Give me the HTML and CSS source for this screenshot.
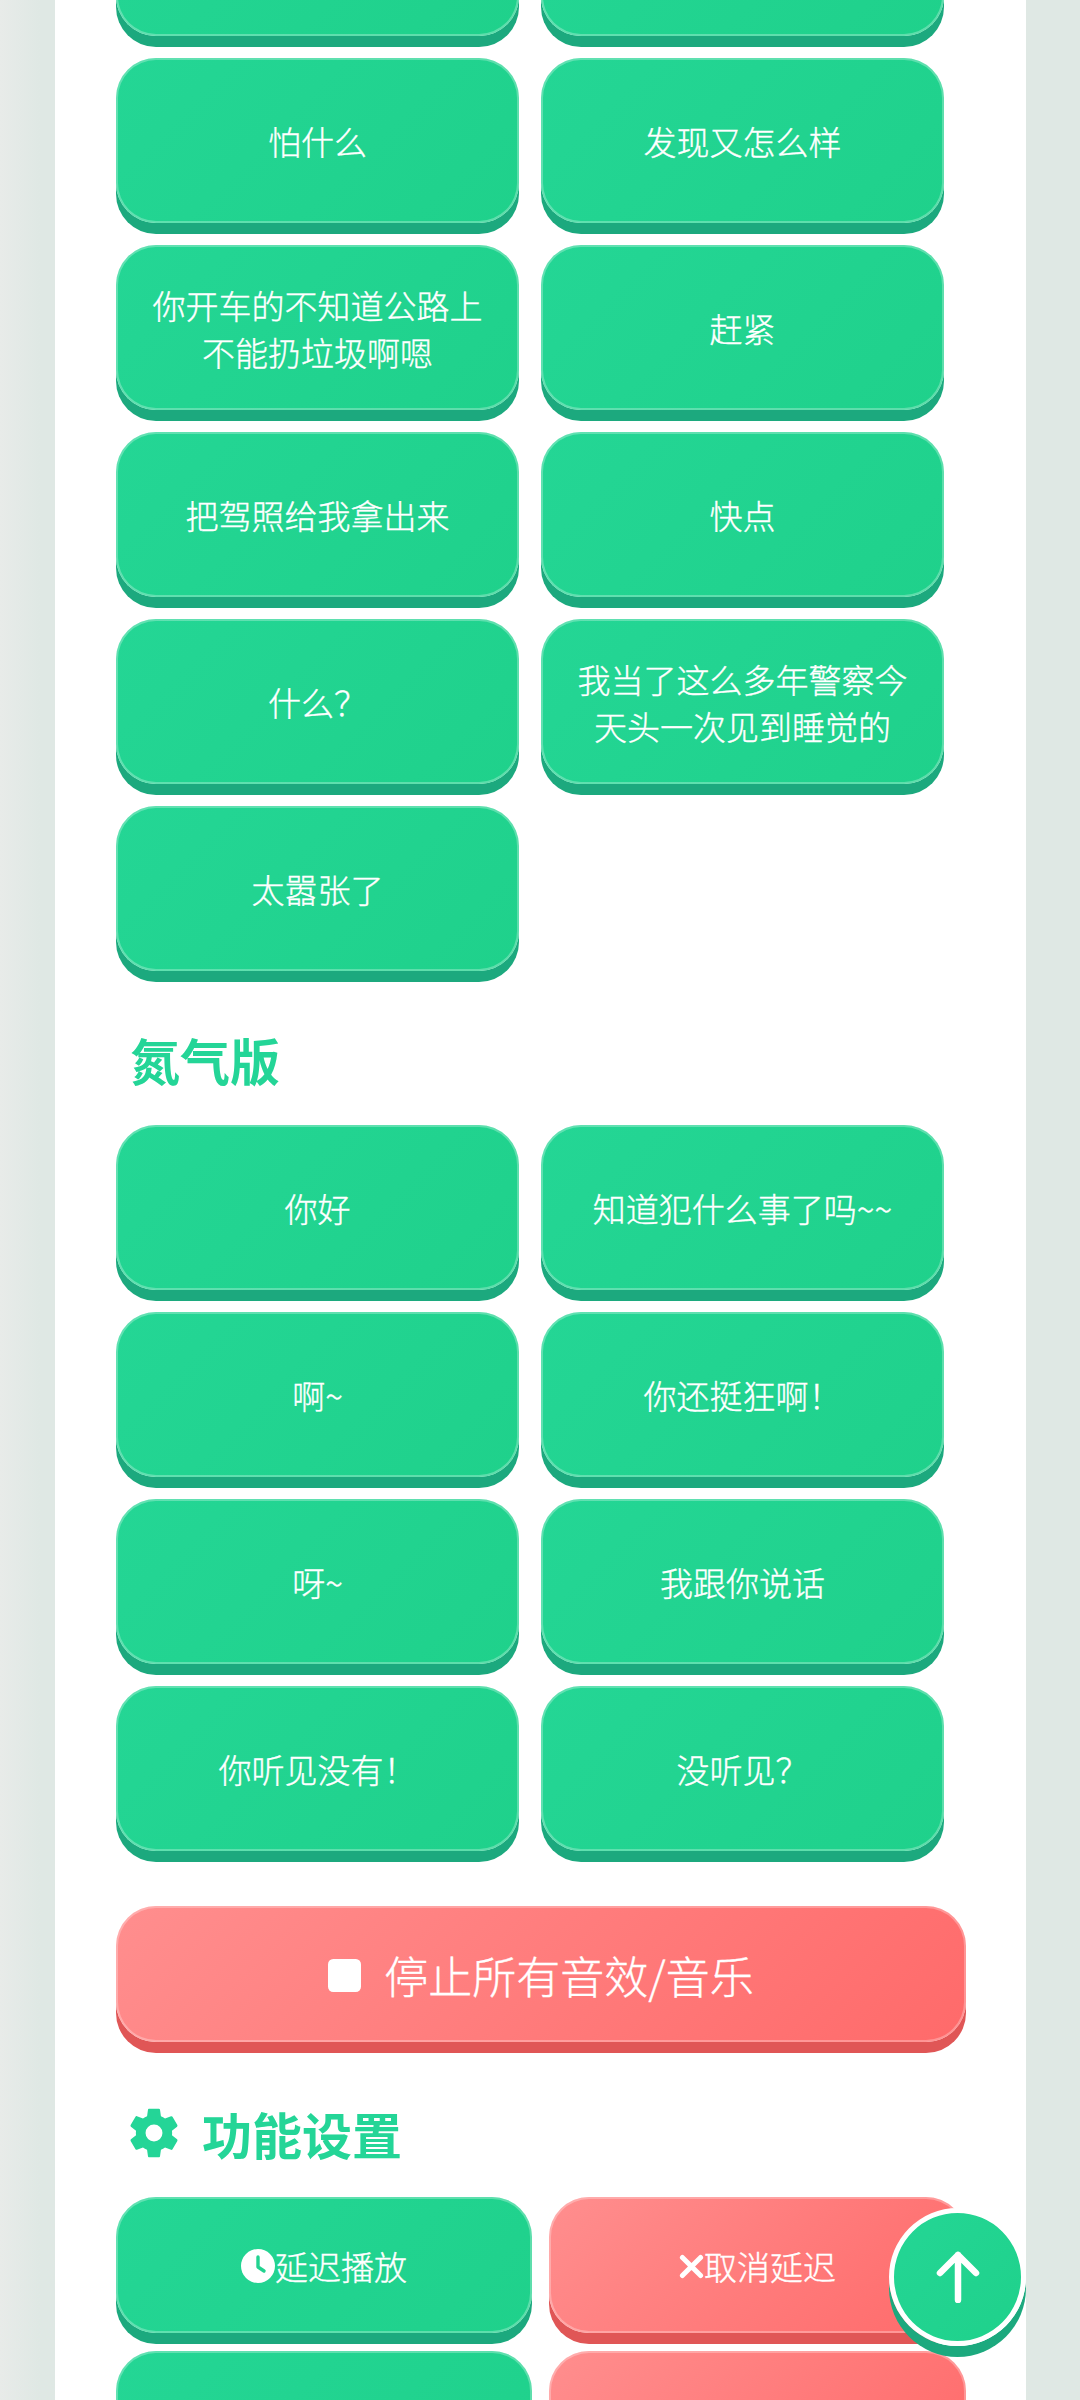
FILE: index.html
```html
<!DOCTYPE html>
<html lang="zh-CN">
<head>
  <meta charset="UTF-8" />
  <meta name="viewport" content="width=device-width, initial-scale=1.0"/>
  <title>音效板</title>
  <link rel="stylesheet" href="styles.css">
</head>
<body>
  <div class="container">
    <div class="sound-grid">
      <button class="btn"></button>
      <button class="btn"></button>
      <button class="btn">怕什么</button>
      <button class="btn">发现又怎么样</button>
      <button class="btn">你开车的不知道公路上不能扔垃圾啊嗯</button>
      <button class="btn">赶紧</button>
      <button class="btn">把驾照给我拿出来</button>
      <button class="btn">快点</button>
      <button class="btn">什么？</button>
      <button class="btn">我当了这么多年警察今天头一次见到睡觉的</button>
      <button class="btn">太嚣张了</button>
    </div>

    <h2 class="section-title">氮气版</h2>
    <div class="sound-grid">
      <button class="btn">你好</button>
      <button class="btn">知道犯什么事了吗~~</button>
      <button class="btn">啊~</button>
      <button class="btn">你还挺狂啊！</button>
      <button class="btn">呀~</button>
      <button class="btn">我跟你说话</button>
      <button class="btn">你听见没有！</button>
      <button class="btn">没听见？</button>
    </div>

    <button class="btn btn-red btn-stop">
      <svg class="stop-icon" viewBox="0 0 32 32"><rect width="32" height="32" rx="5" fill="#fff"/></svg>
      停止所有音效/音乐
    </button>

    <h2 class="section-title settings-title">
      <svg class="gear-icon" viewBox="0 0 24 24"><path fill="#24d597" fill-rule="evenodd" d="M19.43 12.98c.04-.32.07-.64.07-.98s-.03-.66-.07-.98l2.11-1.65c.19-.15.24-.42.12-.64l-2-3.46c-.12-.22-.39-.3-.61-.22l-2.49 1c-.52-.4-1.08-.73-1.69-.98l-.38-2.65A.488.488 0 0 0 14 2h-4c-.25 0-.46.18-.49.42l-.38 2.65c-.61.25-1.17.59-1.69.98l-2.49-1c-.23-.09-.49 0-.61.22l-2 3.46c-.13.22-.07.49.12.64l2.11 1.65c-.04.32-.07.65-.07.98s.03.66.07.98l-2.11 1.65c-.19.15-.24.42-.12.64l2 3.46c.12.22.39.3.61.22l2.49-1c.52.4 1.08.73 1.69.98l.38 2.65c.03.24.24.42.49.42h4c.25 0 .46-.18.49-.42l.38-2.65c.61-.25 1.17-.59 1.69-.98l2.49 1c.23.09.49 0 .61-.22l2-3.46c.12-.22.07-.49-.12-.64l-2.11-1.65zM12 15.5a3.5 3.5 0 1 1 0-7 3.5 3.5 0 0 1 0 7z"/></svg>
      功能设置
    </h2>
    <div class="feature-grid">
      <button class="btn btn-short">
        <svg class="inline-icon" viewBox="0 0 34 34"><circle cx="17" cy="17" r="17" fill="#fff"/><path d="M17 8v10l6 4" fill="none" stroke="#22d390" stroke-width="3.4" stroke-linecap="round" stroke-linejoin="round"/></svg>延迟播放
      </button>
      <button class="btn btn-short btn-red">
        <svg class="inline-icon cross-icon" viewBox="0 0 22 22"><path d="M3 3l16 16M19 3L3 19" fill="none" stroke="#fff" stroke-width="4.4" stroke-linecap="round"/></svg>取消延迟
      </button>
      <button class="btn btn-short"></button>
      <button class="btn btn-short btn-red"></button>
    </div>
  </div>

  <button class="to-top">
    <svg viewBox="0 0 44 52"><path d="M22 49V4M4 22L22 4l18 18" fill="none" stroke="#fff" stroke-width="6.5" stroke-linecap="round" stroke-linejoin="round"/></svg>
  </button>
</body>
</html>
```

FILE: styles.css
```css
html, body {
  height: 2400px;
  overflow: hidden;
}

body {
  position: relative;
  margin: 0;
  font-family: "Noto Sans CJK SC", "Noto Sans", sans-serif;
  background: linear-gradient(90deg, #e8ebe9 0, #dfe8e4 40px);
}

.container {
  box-sizing: border-box;
  width: 971px;
  height: 2600px;
  margin: -129px 0 0 55px;
  padding-left: 61px;
  background: white;
}

.sound-grid {
  display: grid;
  grid-template-columns: 403px 403px;
  grid-auto-rows: 165px;
  gap: 22px;
}

.feature-grid {
  display: grid;
  grid-template-columns: 416px 417px;
  grid-auto-rows: 136px;
  gap: 18px 17px;
}

.btn {
  display: flex;
  justify-content: center;
  align-items: center;
  padding: 2px 30px 0;
  border: none;
  border-radius: 40px;
  font-family: inherit;
  font-size: 33px;
  font-weight: 300;
  line-height: 47px;
  -webkit-text-stroke: 0.35px white;
  color: white;
  background: linear-gradient(135deg, #24d695, #1fd18b);
  box-shadow: 0 11px 0 #1ca97e, inset 0 0 0 2px rgba(255, 255, 255, 0.28);
}

.btn-red {
  background: linear-gradient(135deg, #ff8e8e, #ff6a6a);
  box-shadow: 0 11px 0 #e05656, inset 0 0 0 2px rgba(255, 255, 255, 0.28);
}

.btn-stop {
  width: 850px;
  height: 136px;
  margin-top: 55px;
  font-size: 44px;
}

.stop-icon {
  width: 33px;
  height: 33px;
  margin-right: 23px;
}

.section-title {
  display: flex;
  align-items: center;
  height: 72px;
  margin: 52px 0 30px 14px;
  font-size: 50px;
  line-height: 72px;
  font-weight: bold;
  color: #24d597;
}

.settings-title {
  margin-top: 55px;
  margin-bottom: 28px;
}

.gear-icon {
  width: 58px;
  height: 58px;
  margin: 0 19px 0 -5px;
}

.inline-icon {
  width: 34px;
  height: 34px;
  flex-shrink: 0;
}

.cross-icon {
  width: 25px;
  height: 25px;
}

.to-top {
  position: absolute;
  left: 889px;
  top: 2208px;
  display: flex;
  justify-content: center;
  align-items: center;
  box-sizing: border-box;
  width: 137px;
  height: 138px;
  padding: 0;
  border: 5px solid white;
  border-radius: 50%;
  background: linear-gradient(135deg, #24d695, #1fd18b);
  box-shadow: 0 11px 0 #1ca97e;
}

.to-top svg {
  width: 44px;
  height: 52px;
}
```
